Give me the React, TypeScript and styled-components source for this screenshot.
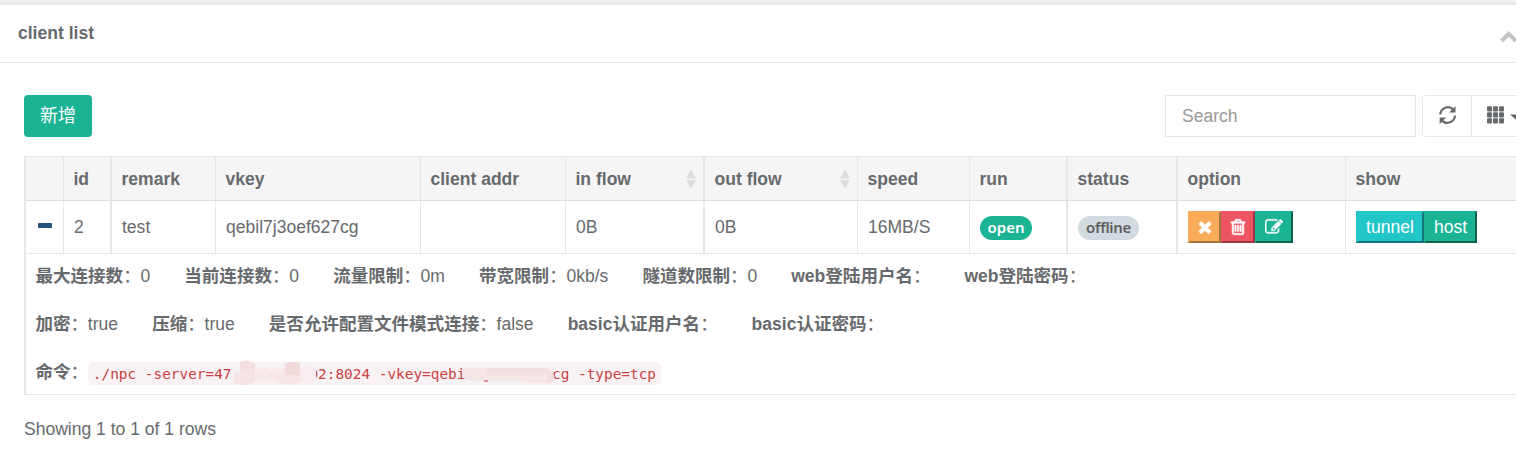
import React from "react";
import styled, { createGlobalStyle, css } from "styled-components";

const Global = createGlobalStyle`
  * { box-sizing: border-box; }
  html, body { margin: 0; padding: 0; overflow: hidden; background: #fff; }
  body {
    font-family: "Liberation Sans", Arial, "Noto Sans CJK SC", sans-serif;
    font-size: 17.55px;
    line-height: 25px;
    color: #676a6c;
  }
`;

const Page = styled.main`
  width: 1516px;
  height: 452px;
  overflow: hidden;
  border-top: 2px solid #f3f3f4;
`;

const TitleBar = styled.header`
  display: flex;
  justify-content: space-between;
  height: 61px;
  border-top: 3px solid #e7eaec;
  border-bottom: 1px solid #e7eaec;
  padding: 15px 0 0 18px;
`;

const Title = styled.h5`
  margin: 0;
  font-size: 17.55px;
  font-weight: 700;
  line-height: 26px;
`;

const Collapse = styled.svg`
  flex: none;
  width: 20px;
  height: 20px;
  margin: 6px -3px 0 0;
`;

const Content = styled.section`
  width: 1530px;
  padding: 32px 0 0 24px;
`;

const Toolbar = styled.div`
  display: flex;
  height: 42px;
  margin-bottom: 19px;
`;

const AddButton = styled.button`
  width: 68px;
  height: 42px;
  margin-right: auto;
  padding: 0;
  border: 0;
  border-radius: 4px;
  background: #1ab394;
  color: #fff;
  font: inherit;
  font-size: 18px;
`;

const SearchInput = styled.input`
  width: 251px;
  height: 42px;
  margin-right: 6px;
  padding: 0 16px;
  border: 1px solid #e5e6e7;
  border-radius: 1px;
  font: inherit;
  color: #676a6c;
  outline: none;
  &::placeholder { color: #999; opacity: 1; }
`;

const ToolGroup = styled.div`
  display: flex;
  width: 108px;
  border: 1px solid #e7eaec;
  border-radius: 4px;
`;

const Tool = styled.button<{ $w: number }>`
  display: flex;
  align-items: center;
  width: ${(p) => p.$w}px;
  padding: 0 0 3px 15px;
  border: 0;
  background: none;
  & + & { border-left: 1px solid #e7eaec; padding-left: 15px; gap: 5px; }
`;

const Caret = styled.svg`
  width: 12px;
  height: 6px;
  margin-top: 4px;
`;

const Table = styled.div`
  border-left: 2px solid #e7e7e7;
  border-top: 1px solid #e7e7e7;
`;

const Cell = styled.div<{ $thick?: boolean }>`
  display: flex;
  align-items: center;
  border-right: ${(p) => (p.$thick ? 2 : 1)}px solid #e7e7e7;
  padding: 0 10px;
  white-space: nowrap;
  &:last-child { border-right: 0; }
`;

const Row = styled.div<{ $head?: boolean }>`
  display: grid;
  grid-template-columns: 38px 48px 104px 205px 145px 139px 153px 112px 98px 110px 168px 1fr;
  height: 53px;
  border-bottom: 1px solid #e7e7e7;
  ${(p) =>
    p.$head &&
    css`
      height: 44px;
      background: #f5f5f6;
      border-bottom-color: #ddd;
      font-weight: 700;
      ${Cell} { padding: 2px 10px 0 9.5px; }
    `}
`;

const SortMark = styled.svg`
  width: 10px;
  height: 20px;
  margin: -1px -3px 0 auto;
`;

const Minus = styled.span`
  width: 14px;
  height: 5px;
  margin: -4px 0 0 2px;
  border-radius: 1px;
  background: #23527c;
`;

const Badge = styled.span<{ $on?: boolean }>`
  width: ${(p) => (p.$on ? 52 : 61)}px;
  text-align: center;
  border-radius: 12px;
  height: 24px;
  margin-top: 1px;
  line-height: 23px;
  font-family: "Noto Sans", sans-serif;
  font-size: 15px;
  font-weight: 600;
  letter-spacing: ${(p) => (p.$on ? "0" : "-0.35px")};
  color: ${(p) => (p.$on ? "#fff" : "#5e5e5e")};
  background: ${(p) => (p.$on ? "#1ab394" : "#d1dade")};
`;

const Action = styled.button<{ $bg: string; $w: number }>`
  display: flex;
  align-items: center;
  justify-content: center;
  flex: none;
  width: ${(p) => p.$w}px;
  height: 32px;
  padding: 0;
  color: #fff;
  font: inherit;
  border: 2px outset ${(p) => p.$bg};
  border-top-color: ${(p) => p.$bg};
  border-left-color: ${(p) => p.$bg};
  background: ${(p) => p.$bg};
`;

const Detail = styled.div`
  height: 141px;
  padding: 10px 10px 0 9.5px;
  border-bottom: 1px solid #e7e7e7;
`;

const DetailLine = styled.p`
  display: flex;
  height: 25px;
  margin: 0 0 23px;
  white-space: pre;
`;

const Field = styled.span<{ $gap?: number }>`
  display: flex;
  margin-right: ${(p) => p.$gap ?? 34.1}px;
`;

const Colon = styled.span`
  width: 17.3px;
`;

const Code = styled.code`
  position: relative;
  display: block;
  width: 573px;
  height: 23px;
  margin-top: 2px;
  padding-left: 5px;
  border-radius: 5px;
  background: #f9f2f4;
  color: #c93f42;
  font-family: "DejaVu Sans Mono", monospace;
  font-size: 14.4px;
  line-height: 24px;
`;

const Smudge = styled.svg`
  position: absolute;
  left: 142px;
  top: -3px;
  width: 330px;
  height: 27px;
`;

const Footer = styled.p`
  margin: 22px 0 0;
`;

const FA: Record<string, string> = {
  times:
    "M1490 1322q0 40-28 68l-136 136q-28 28-68 28t-68-28l-294-294-294 294q-28 28-68 28t-68-28l-136-136q-28-28-28-68t28-68l294-294-294-294q-28-28-28-68t28-68l136-136q28-28 68-28t68 28l294 294 294-294q28-28 68-28t68 28l136 136q28 28 28 68t-28 68l-294 294 294 294q28 28 28 68z",
  trash:
    "M704 736v576q0 14-9 23t-23 9h-64q-14 0-23-9t-9-23v-576q0-14 9-23t23-9h64q14 0 23 9t9 23zm256 0v576q0 14-9 23t-23 9h-64q-14 0-23-9t-9-23v-576q0-14 9-23t23-9h64q14 0 23 9t9 23zm256 0v576q0 14-9 23t-23 9h-64q-14 0-23-9t-9-23v-576q0-14 9-23t23-9h64q14 0 23 9t9 23zm128 724v-948h-896v948q0 22 7 40.5t14.5 27 10.5 8.5h832q3 0 10.5-8.5t14.5-27 7-40.5zm-672-1076h448l-48-117q-7-9-17-11h-317q-10 2-17 11zm928 32v64q0 14-9 23t-23 9h-96v948q0 83-47 143.5t-113 60.5h-832q-66 0-113-58.5t-47-141.5v-952h-96q-14 0-23-9t-9-23v-64q0-14 9-23t23-9h309l70-167q15-37 54-63t79-26h320q40 0 79 26t54 63l70 167h309q14 0 23 9t9 23z",
  edit:
    "M888 1184l116-116-152-152-116 116v56h96v96h56zm440-720q-16-16-33 1l-350 350q-17 17-1 33t33-1l350-350q17-17 1-33zm80 594v190q0 119-84.5 203.5t-203.5 84.5h-832q-119 0-203.5-84.5t-84.5-203.5v-832q0-119 84.5-203.5t203.5-84.5h832q63 0 117 25 15 7 18 23 3 17-9 29l-49 49q-14 14-32 8-23-6-45-6h-832q-66 0-113 47t-47 113v832q0 66 47 113t113 47h832q66 0 113-47t47-113v-126q0-13 9-22l64-64q15-15 35-7t20 29zm-96-738l288 288-672 672h-288v-288zm444 132l-92 92-288-288 92-92q28-28 68-28t68 28l152 152q28 28 28 68t-28 68z",
};

const Glyph = ({ name, weight = 0 }: { name: string; weight?: number }) => (
  <svg width="18" height="18" viewBox="0 0 1792 1792" fill="#fff" stroke="#fff" strokeWidth={weight}>
    <path d={FA[name]} />
  </svg>
);

const Sort = () => (
  <SortMark viewBox="0 0 10 20" fill="#dcdcdc">
    <path d="M5 0.5L10 9.5H0zM0 11H10L5 19.5z" />
  </SortMark>
);

const Item = ({ label, value, gap }: { label: string; value?: string; gap?: number }) => (
  <Field $gap={gap}>
    <b>{label}</b>
    <Colon>：</Colon>
    {value}
  </Field>
);

export default function App() {
  return (
    <>
      <Global />
      <Page>
        <TitleBar>
          <Title>client list</Title>
          <Collapse viewBox="0 0 20 20">
            <path d="M2.500 15L9.700 7.800L17 15" fill="none" stroke="#c4c4c4" strokeWidth="4" />
          </Collapse>
        </TitleBar>
        <Content>
          <Toolbar>
            <AddButton>新增</AddButton>
            <SearchInput placeholder="Search" />
            <ToolGroup>
              <Tool $w={48} aria-label="refresh">
                <svg width="20" height="20" viewBox="0 0 20 20" fill="none" stroke="#676a6c" strokeWidth="2.2">
                  <path d="M2.200 9.500C2.800 2.800 10.500 -0.300 15.200 4.400M17 10.500C16.400 17.200 8.700 20.300 4 15.600" />
                  <path d="M17.500 1v6.500h-6.500zM1.700 19v-6.500h6.500z" fill="#676a6c" stroke="none" />
                </svg>
              </Tool>
              <Tool $w={58} aria-label="columns">
                <svg width="18" height="18" viewBox="0 0 18 18" fill="#676a6c">
                  {[0, 6, 12].map((y) =>
                    [0, 6, 12].map((x) => <rect key={`${x}-${y}`} x={x} y={y + 0.3} width="5" height="5.300" rx="1" />)
                  )}
                </svg>
                <Caret viewBox="0 0 12 6" fill="#676a6c">
                  <path d="M0 0.500h11L5.500 5.500z" />
                </Caret>
              </Tool>
            </ToolGroup>
          </Toolbar>
          <Table>
            <Row $head>
              <Cell />
              <Cell $thick>id</Cell>
              <Cell>remark</Cell>
              <Cell>vkey</Cell>
              <Cell>client addr</Cell>
              <Cell $thick>in flow<Sort /></Cell>
              <Cell>out flow<Sort /></Cell>
              <Cell>speed</Cell>
              <Cell $thick>run</Cell>
              <Cell $thick>status</Cell>
              <Cell>option</Cell>
              <Cell>show</Cell>
            </Row>
            <Row>
              <Cell><Minus /></Cell>
              <Cell $thick>2</Cell>
              <Cell>test</Cell>
              <Cell>qebil7j3oef627cg</Cell>
              <Cell />
              <Cell $thick>0B</Cell>
              <Cell>0B</Cell>
              <Cell>16MB/S</Cell>
              <Cell $thick><Badge $on>open</Badge></Cell>
              <Cell $thick><Badge>offline</Badge></Cell>
              <Cell>
                <Action $bg="#f8ac59" $w={33}><Glyph name="times" weight={60} /></Action>
                <Action $bg="#ed5565" $w={34}><Glyph name="trash" weight={70} /></Action>
                <Action $bg="#1ab394" $w={38}><Glyph name="edit" weight={40} /></Action>
              </Cell>
              <Cell>
                <Action $bg="#23c6c8" $w={68}>tunnel</Action>
                <Action $bg="#1ab394" $w={53}>host</Action>
              </Cell>
            </Row>
            <Detail>
              <DetailLine>
                <Item label="最大连接数" value="0" />
                <Item label="当前连接数" value="0" />
                <Item label="流量限制" value="0m" />
                <Item label="带宽限制" value="0kb/s" />
                <Item label="隧道数限制" value="0" />
                <Item label="web登陆用户名" />
                <Item label="web登陆密码" />
              </DetailLine>
              <DetailLine>
                <Item label="加密" value="true" />
                <Item label="压缩" value="true" />
                <Item label="是否允许配置文件模式连接" value="false" />
                <Item label="basic认证用户名" />
                <Item label="basic认证密码" />
              </DetailLine>
              <DetailLine>
                <Item label="命令" gap={0} />
                <Code>
                  {"./npc -server=47         92:8024 -vkey=qebi          cg -type=tcp"}
                  <Smudge viewBox="0 0 330 27">
                    <path d="M4 12H84Q88 18 84 25H4z" fill="#f9f0f1" />
                    <path d="M10 3Q17 -1 25 5V16H10z" fill="#f3e1e2" />
                    <path d="M4 17Q2 12 10 14H25V22Q20 27 12 26L4 24z" fill="#f5e4e4" />
                    <path d="M25 12Q34 6 41 11Q48 8 55 10V22Q40 19 25 22z" fill="#f6e9ea" />
                    <path d="M55 5Q62 1 70 4V16H55z" fill="#f2dada" />
                    <path d="M46 16H70V23Q64 27 54 25Q46 23 46 16z" fill="#f5e5e5" />
                    <path d="M70 10Q78 3 86 9V22Q78 26 70 22z" fill="#f8edee" />
                    <path d="M232 9H317Q323 12 324 19Q326 23 318 24Q303 25 291 22H248Q236 22 232 16z" fill="#f6e7e7" />
                    <path d="M255 9H316Q322 12 321 16H255z" fill="#f4e0e1" />
                    <path d="M317 16H324Q326 23 317 25z" fill="#f3dedf" />
                    <path d="M254 22H258" stroke="#c93f42" />
                  </Smudge>
                </Code>
              </DetailLine>
            </Detail>
          </Table>
          <Footer>Showing 1 to 1 of 1 rows</Footer>
        </Content>
      </Page>
    </>
  );
}
